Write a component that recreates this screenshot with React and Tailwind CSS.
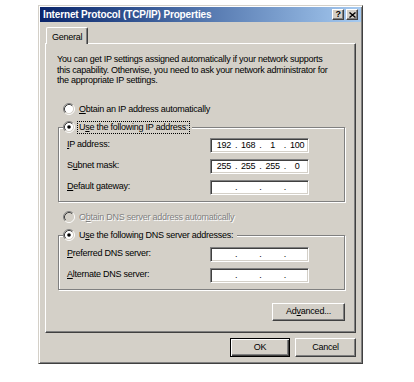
import React from "react";

const raised =
  "border border-t-white border-l-white border-r-[#404040] border-b-[#404040] shadow-[inset_-1px_-1px_0_#808080,inset_1px_1px_0_#d4d0c8]";
const sunken =
  "border border-t-[#808080] border-l-[#808080] border-r-white border-b-white shadow-[inset_1px_1px_0_#404040,inset_-1px_-1px_0_#d4d0c8]";

function Radio({ checked, disabled }) {
  return (
    <svg width="12" height="12" viewBox="0 0 12 12" className="shrink-0">
      <circle cx="6" cy="6" r="4.5" fill={disabled ? "#d4d0c8" : "#fff"} />
      <path d="M2.11 9.89 A5.5 5.5 0 0 1 9.89 2.11" stroke="#808080" fill="none" />
      <path d="M9.89 2.11 A5.5 5.5 0 0 1 2.11 9.89" stroke="#fff" fill="none" />
      <path d="M2.82 9.18 A4.5 4.5 0 0 1 9.18 2.82" stroke="#404040" fill="none" />
      <path d="M9.18 2.82 A4.5 4.5 0 0 1 2.82 9.18" stroke="#d4d0c8" fill="none" />
      {checked && <circle cx="6" cy="6" r="1.8" fill="#000" />}
    </svg>
  );
}

function RadioRow({ checked, disabled, focus, children }) {
  return (
    <div className="flex items-center h-[13px]">
      <Radio checked={checked} disabled={disabled} />
      <span
        className={
          "ml-[2px] px-[1px] leading-[11px] border " +
          (focus ? "border-dotted border-black" : "border-transparent") +
          (disabled ? " text-[#808080] [text-shadow:1px_1px_0_#fff]" : "")
        }
      >
        {children}
      </span>
    </div>
  );
}

function IpField({ parts }) {
  const segs = parts || ["", "", "", ""];
  return (
    <div className={"w-[99px] h-[15px] bg-white flex items-center pl-[2px] " + sunken}>
      {segs.map((s, i) => (
        <React.Fragment key={i}>
          <span className="w-[22px] text-center leading-[11px]">{s}</span>
          {i < 3 && <span className="w-[3px] text-center leading-[11px]">.</span>}
        </React.Fragment>
      ))}
    </div>
  );
}

function FieldRow({ label, parts }) {
  return (
    <div className="flex items-center justify-between h-[21px] pl-[8px] pr-[35px]">
      <span>{label}</span>
      <IpField parts={parts} />
    </div>
  );
}

function Group({ legend, children, pt }) {
  return (
    <fieldset className="border border-[#808080] shadow-[inset_1px_1px_0_#fff,1px_1px_0_#fff] p-0 pb-[3px]">
      <legend className="ml-[4px] pr-[2px] bg-[#d4d0c8]">{legend}</legend>
      <div className={pt}>{children}</div>
    </fieldset>
  );
}

function U({ children }) {
  return <span className="underline underline-offset-[1px]">{children}</span>;
}

export default function App() {
  return (
    <div
      className="w-[414px] h-[382px] bg-white pt-[5px] pl-[38px] text-[9px] tracking-[-0.25px] text-black"
      style={{ fontFamily: '"Liberation Sans", Arial, sans-serif' }}
    >
      <div className="w-[325px] h-[359px] bg-[#d4d0c8] p-[1px] border border-t-[#d4d0c8] border-l-[#d4d0c8] border-r-[#404040] border-b-[#404040] shadow-[inset_1px_1px_0_#fff,inset_-1px_-1px_0_#808080] flex flex-col">
        {/* title bar */}
        <div className="h-[15px] flex items-center pl-[3px] pr-[3px] bg-gradient-to-r from-[#0a246a] to-[#a6caf0]">
          <span className="text-white font-bold text-[10px] tracking-[-0.15px]">
            Internet Protocol (TCP/IP) Properties
          </span>
          <div className="ml-auto flex gap-[2px]">
            <div className={"w-[12px] h-[11px] bg-[#d4d0c8] flex items-center justify-center font-bold text-[9px] leading-none " + raised}>
              ?
            </div>
            <div className={"w-[12px] h-[11px] bg-[#d4d0c8] flex items-center justify-center " + raised}>
              <svg width="7" height="6" viewBox="0 0 7 6">
                <path d="M0.5 0.5 L6.5 5.5 M6.5 0.5 L0.5 5.5" stroke="#000" strokeWidth="1.4" />
              </svg>
            </div>
          </div>
        </div>

        <div className="px-[5px] pt-[5px] flex flex-col">
          {/* tab */}
          <div className="flex">
            <div className="relative z-10 ml-[1px] -mb-[1px] h-[17px] px-[5px] pt-[3px] bg-[#d4d0c8] border-t border-l border-r border-t-white border-l-white border-r-[#404040] shadow-[inset_-1px_0_0_#808080] rounded-tl-[2px] rounded-tr-[2px]">
              General
            </div>
          </div>

          {/* tab page */}
          <div className="h-[290px] border border-t-white border-l-white border-r-[#404040] border-b-[#404040] shadow-[inset_-1px_-1px_0_#808080] pt-[10px] pl-[12px] pr-[10px] flex flex-col">
            <p className="-ml-[1px] leading-[10.5px]">
              You can get IP settings assigned automatically if your network supports
              <br />
              this capability. Otherwise, you need to ask your network administrator for
              <br />
              the appropriate IP settings.
            </p>

            <div className="mt-[17px] pl-[5px]">
              <RadioRow>
                <U>O</U>btain an IP address automatically
              </RadioRow>
            </div>

            <div className="mt-[5px]">
              <Group
                pt="pt-[1px]"
                legend={
                  <RadioRow checked focus>
                    U<U>s</U>e the following IP address:
                  </RadioRow>
                }
              >
                <FieldRow label={<><U>I</U>P address:</>} parts={["192", "168", "1", "100"]} />
                <FieldRow label={<>S<U>u</U>bnet mask:</>} parts={["255", "255", "255", "0"]} />
                <FieldRow label={<><U>D</U>efault gateway:</>} />
              </Group>
            </div>

            <div className="mt-[9px] pl-[5px]">
              <RadioRow disabled>
                O<U>b</U>tain DNS server address automatically
              </RadioRow>
            </div>

            <div className="mt-[5px]">
              <Group
                pt="pt-[2px]"
                legend={
                  <RadioRow checked>
                    U<U>s</U>e the following DNS server addresses:
                  </RadioRow>
                }
              >
                <FieldRow label={<><U>P</U>referred DNS server:</>} />
                <FieldRow label={<><U>A</U>lternate DNS server:</>} />
              </Group>
            </div>

            <div className="mt-[13px] flex justify-end">
              <button className={"w-[73px] h-[18px] bg-[#d4d0c8] flex items-center justify-center " + raised}>
                Ad<U>v</U>anced...
              </button>
            </div>
          </div>

          {/* bottom buttons */}
          <div className="mt-[5px] flex justify-end gap-[5px] pr-[0px]">
            <button className="w-[60px] h-[19px] bg-[#d4d0c8] flex items-center justify-center border border-black shadow-[inset_1px_1px_0_#fff,inset_-1px_-1px_0_#404040,inset_-2px_-2px_0_#808080]">
              OK
            </button>
            <button className={"w-[61px] h-[19px] bg-[#d4d0c8] flex items-center justify-center " + raised}>
              Cancel
            </button>
          </div>
        </div>
      </div>
    </div>
  );
}
